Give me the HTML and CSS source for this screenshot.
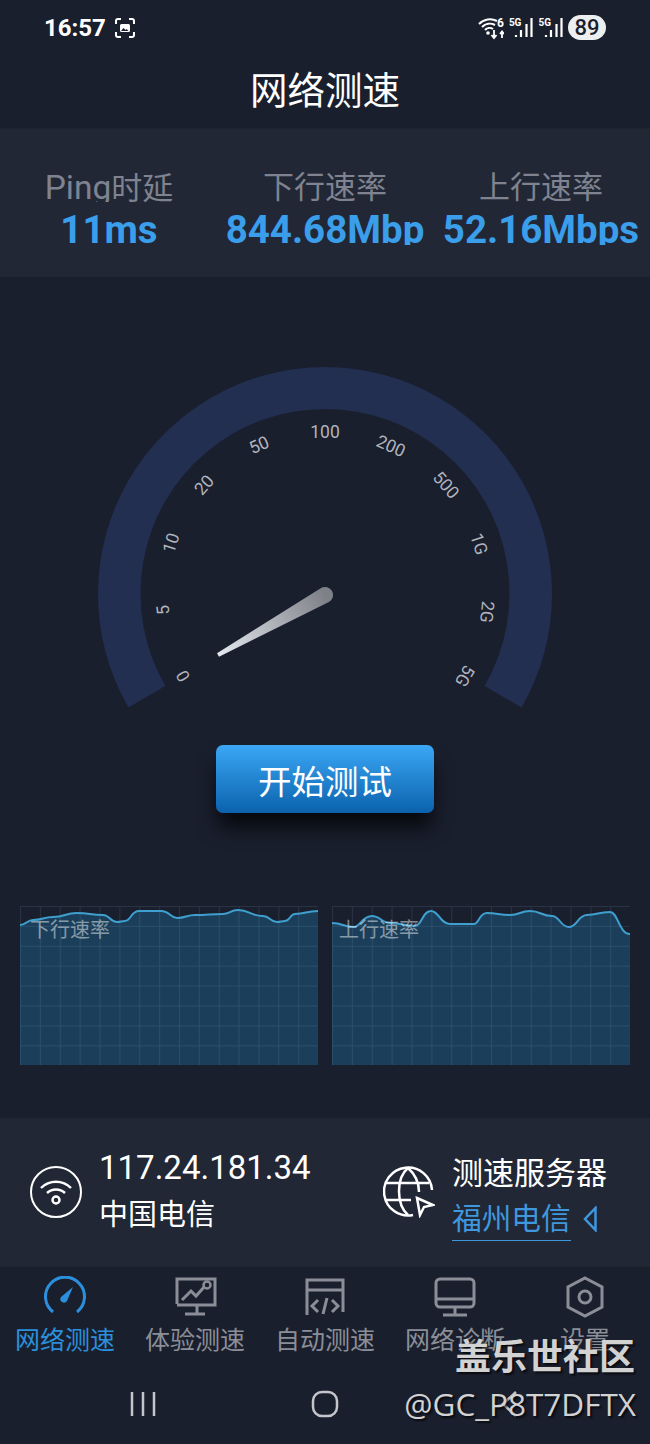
FILE: index.html
```html
<!DOCTYPE html>
<html lang="zh-CN">
<head>
  <meta charset="UTF-8">
  <title>网络测速</title>
  <link rel="stylesheet" href="styles.css">
</head>
<body>
  <div class="status">
    <div class="status-left">
      <span class="clock">16:57</span>
      <svg class="shot" width="22" height="22" viewBox="0 0 22 22">
        <path d="M2 7V4a2 2 0 0 1 2-2h3M15 2h3a2 2 0 0 1 2 2v3M20 15v3a2 2 0 0 1-2 2h-3M7 20H4a2 2 0 0 1-2-2v-3" fill="none" stroke="#fff" stroke-width="2"/>
        <rect x="6" y="7" width="10" height="8" rx="1.5" fill="#fff"/>
        <path d="M7 14l2.500-3 2 2 1-1 2 2z" fill="#1a1f2e"/>
      </svg>
    </div>
    <div class="status-right">
      <svg width="26" height="28" viewBox="0 0 26 28">
        <path d="M1 10a15 15 0 0 1 18-3M4 13a11 11 0 0 1 13-2M7 16a6 6 0 0 1 8-1" fill="none" stroke="#fff" stroke-width="2"/>
        <circle cx="10" cy="19" r="1.800" fill="#fff"/>
        <path d="M16 16v8M13.500 21l2.500 3 2.500-3M24 24v-6M22 20l2-2.500 2 2.500" fill="none" stroke="#fff" stroke-width="1.800"/>
        <text class="wifi-six" x="19" y="13">6</text>
      </svg>
      <div class="signal">
        <span class="five-g">5G</span>
        <svg width="20" height="22" viewBox="0 0 20 22">
          <path d="M3 18v2M8 13v7M13.500 7v13M18.500 1v19" stroke="#fff" stroke-width="2.200"/>
        </svg>
      </div>
      <div class="signal">
        <span class="five-g">5G</span>
        <svg width="20" height="22" viewBox="0 0 20 22">
          <path d="M3 18v2M8 13v7M13.500 7v13M18.500 1v19" stroke="#fff" stroke-width="2.200"/>
        </svg>
      </div>
      <span class="battery">89</span>
    </div>
  </div>

  <h1 class="title">网络测速</h1>

  <div class="stats">
    <div class="stat">
      <div class="stat-label"><span class="latin">Ping</span>时延</div>
      <div class="stat-value">11ms</div>
    </div>
    <div class="stat">
      <div class="stat-label">下行速率</div>
      <div class="stat-value">844.68Mbp</div>
    </div>
    <div class="stat">
      <div class="stat-label">上行速率</div>
      <div class="stat-value">52.16Mbps</div>
    </div>
  </div>

  <svg class="gauge" width="650" height="450" viewBox="0 277 650 450">
    <defs>
      <linearGradient id="needleFill" gradientUnits="userSpaceOnUse" x1="218" y1="655" x2="325" y2="595">
        <stop offset="0" stop-color="#e4e8ef"/>
        <stop offset="1" stop-color="#7e8187"/>
      </linearGradient>
    </defs>
    <path d="M128.400 707.500A227 227 0 1 1 521.600 707.500L484.600 686A184.500 184.500 0 1 0 165.400 686Z" fill="#222f50"/>
    <g class="gauge-nums">
      <text transform="translate(183 676) rotate(-120)">0</text>
      <text transform="translate(163 610) rotate(-96)">5</text>
      <text transform="translate(171 543) rotate(-72)">10</text>
      <text transform="translate(204 485) rotate(-48)">20</text>
      <text transform="translate(259 445) rotate(-24)">50</text>
      <text transform="translate(325 432)">100</text>
      <text transform="translate(391 446) rotate(24)">200</text>
      <text transform="translate(446 485) rotate(48)">500</text>
      <text transform="translate(479 544) rotate(72)">1G</text>
      <text transform="translate(487 612) rotate(96)">2G</text>
      <text transform="translate(465 676) rotate(120)">5G</text>
    </g>
    <path d="M219 656.700L217 653.300L321.100 588A8 8 0 0 1 328.900 602Z" fill="url(#needleFill)"/>
  </svg>

  <button class="start">开始测试</button>

  <div class="charts">
    <svg class="chart" width="298" height="159" viewBox="0 0 298 159">
      <defs>
        <pattern id="grid" width="19.870" height="19.900" patternUnits="userSpaceOnUse">
          <path d="M0.500 0V19.900M0 0.500H19.870" fill="none" stroke="#8fbcd6" stroke-opacity="0.13"/>
        </pattern>
      </defs>
      <path class="area" d="M0 19C6 19 7 14 13 14C23 14 23 11 33 11C45 11 45 7 57 7C70 7 70 9 83 9C90 9 90 16 97 16C101 16 101 15 105 15C111 15 111 5 119 5H141C150 5 150 12 157 12C166 12 166 9 175 9C189 9 189 8 203 8C210 8 210 4 218 4C230 4 230 10 243 10C250 10 250 16 257 16C261 16 261 15 265 15C270 15 270 8 275 8C286 8 286 5 298 5V159H0Z"/>
      <rect class="grid" width="298" height="159"/>
      <path class="line" d="M0 19C6 19 7 14 13 14C23 14 23 11 33 11C45 11 45 7 57 7C70 7 70 9 83 9C90 9 90 16 97 16C101 16 101 15 105 15C111 15 111 5 119 5H141C150 5 150 12 157 12C166 12 166 9 175 9C189 9 189 8 203 8C210 8 210 4 218 4C230 4 230 10 243 10C250 10 250 16 257 16C261 16 261 15 265 15C270 15 270 8 275 8C286 8 286 5 298 5"/>
      <text class="chart-label" x="10" y="31">下行速率</text>
    </svg>
    <svg class="chart" width="298" height="159" viewBox="0 0 298 159">
      <path class="area" d="M0 17C11 17 11 21 22 21C28 21 30 10 40 10C48 10 50 17 58 17C71 17 71 20 83 20C90 20 90 5 99 5C107 5 108 18 118 18H142C147 18 147 7 155 7C166 7 166 9 178 9C188 9 188 5 198 5C209 5 209 10 220 10C228 10 228 21 237 21C245 21 246 9 255 9C266 9 266 6 278 6C286 6 287 28 298 28V159H0Z"/>
      <rect class="grid" width="298" height="159"/>
      <path class="line" d="M0 17C11 17 11 21 22 21C28 21 30 10 40 10C48 10 50 17 58 17C71 17 71 20 83 20C90 20 90 5 99 5C107 5 108 18 118 18H142C147 18 147 7 155 7C166 7 166 9 178 9C188 9 188 5 198 5C209 5 209 10 220 10C228 10 228 21 237 21C245 21 246 9 255 9C266 9 266 6 278 6C286 6 287 28 298 28"/>
      <text class="chart-label" x="7" y="31">上行速率</text>
    </svg>
  </div>

  <div class="info">
    <div class="info-block">
      <svg width="52" height="52" viewBox="0 0 52 52">
        <circle cx="26" cy="26" r="25" fill="none" stroke="#fff" stroke-width="2"/>
        <path d="M11 22a21 21 0 0 1 30 0M17 27a13 13 0 0 1 18 0" fill="none" stroke="#fff" stroke-width="2.500"/>
        <circle cx="26" cy="34" r="3.500" fill="none" stroke="#fff" stroke-width="2.500"/>
      </svg>
      <div class="info-text">
        <div class="ip">117.24.181.34</div>
        <div class="isp">中国电信</div>
      </div>
    </div>
    <div class="info-block">
      <svg width="52" height="52" viewBox="0 0 52 52">
        <path d="M30 49A24 24 0 1 1 49 24" fill="none" stroke="#fff" stroke-width="2.500"/>
        <path d="M25 2C13 12 13 38 25 49M25 2C33 9 36 17 36 26M3 17H46M3 34H28" fill="none" stroke="#fff" stroke-width="2.500"/>
        <path d="M34 32L50 39L41 41L37 49Z" fill="#222735" stroke="#fff" stroke-width="2.500"/>
      </svg>
      <div class="info-text">
        <div class="server-title">测速服务器</div>
        <div class="server-row">
          <span class="server-name">福州电信</span>
          <svg width="14" height="26" viewBox="0 0 14 26">
            <path d="M12.500 2V24L2 13Z" fill="none" stroke="#3f97dd" stroke-width="2.500"/>
          </svg>
        </div>
      </div>
    </div>
  </div>

  <div class="tabs">
    <div class="tab active">
      <svg width="44" height="42" viewBox="0 0 44 42">
        <path d="M10 36A19.500 19.500 0 1 1 34 36" fill="none" stroke="#2b8fdc" stroke-width="3"/>
        <path d="M30 11L24 25A3.500 3.500 0 0 1 18 21Z" fill="#2b8fdc"/>
      </svg>
      <span>网络测速</span>
    </div>
    <div class="tab">
      <svg width="44" height="42" viewBox="0 0 44 42">
        <path d="M4 28V3H42V29H4M24 29V37M12 38H32" fill="none" stroke="#8b8e97" stroke-width="3"/>
        <path d="M9 24L18 15L23 20L32 10" fill="none" stroke="#8b8e97" stroke-width="3"/>
        <circle cx="34" cy="9" r="3.500" fill="#1a1f2e" stroke="#8b8e97" stroke-width="2.500"/>
      </svg>
      <span>体验测速</span>
    </div>
    <div class="tab">
      <svg width="44" height="42" viewBox="0 0 44 42">
        <path d="M4 39V4H40V36M4 14H40" fill="none" stroke="#8b8e97" stroke-width="3"/>
        <path d="M15 24L9 30L15 36M29 24L35 30L29 36M24 22L20 38" fill="none" stroke="#8b8e97" stroke-width="3"/>
      </svg>
      <span>自动测速</span>
    </div>
    <div class="tab">
      <svg width="44" height="42" viewBox="0 0 44 42">
        <rect x="3" y="3" width="38" height="28" rx="4" fill="none" stroke="#8b8e97" stroke-width="3"/>
        <path d="M3 23H41M22 31V38M10 39H34" fill="none" stroke="#8b8e97" stroke-width="3"/>
      </svg>
      <span>网络诊断</span>
    </div>
    <div class="tab">
      <svg width="44" height="42" viewBox="0 0 44 42">
        <path d="M22 2L39 11V31L22 40L5 31V11Z" fill="none" stroke="#8b8e97" stroke-width="3"/>
        <circle cx="22" cy="21" r="6" fill="none" stroke="#8b8e97" stroke-width="3"/>
      </svg>
      <span>设置</span>
    </div>
  </div>

  <div class="navbar">
    <svg width="28" height="28" viewBox="0 0 28 28">
      <path d="M3 2V26M14 2V26M25 2V26" stroke="#c4c6cb" stroke-width="2.500"/>
    </svg>
    <svg width="28" height="28" viewBox="0 0 28 28">
      <rect x="2" y="2" width="24" height="24" rx="9" fill="none" stroke="#c4c6cb" stroke-width="2.500"/>
    </svg>
    <svg width="28" height="28" viewBox="0 0 28 28">
      <path d="M23 2L10 14L23 26" fill="none" stroke="#c4c6cb" stroke-width="2.500"/>
    </svg>
  </div>

  <div class="mark">
    <div class="mark-name">盖乐世社区</div>
    <div class="mark-user">@GC_P8T7DFTX</div>
  </div>
</body>
</html>
```

FILE: styles.css
```css
* { box-sizing: border-box; }
html, body { margin: 0; padding: 0; }
body {
  position: relative;
  width: 650px;
  height: 1444px;
  overflow: hidden;
  background: #1a1f2e;
  color: #fff;
  font-family: Roboto, "Noto Sans CJK SC", sans-serif;
}

.status { height: 55px; padding: 0 44px; display: flex; justify-content: space-between; align-items: center; }
.status-left { display: flex; align-items: center; gap: 8px; }
.clock { font-size: 24px; font-weight: 700; }
.status-right { display: flex; align-items: center; gap: 5px; }
.wifi-six { font-size: 12px; font-weight: 700; fill: #fff; }
.signal { display: flex; align-items: flex-end; }
.five-g { font-size: 10px; font-weight: 700; margin-right: -8px; align-self: flex-start; line-height: 12px; }
.battery { width: 38px; height: 25px; border-radius: 13px; background: #eceef0; color: #1a1f2e; font-size: 22px; font-weight: 500; line-height: 25px; text-align: center; }

.title { margin: 0; height: 73px; font-size: 37.500px; font-weight: 400; line-height: 72px; text-align: center; }

.stats { height: 149px; background: #222735; border-top: 1px solid #1f2431; display: grid; grid-template-columns: repeat(3, 1fr); padding: 38px 1px 0; }
.stat { text-align: center; }
.stat-label { height: 35px; overflow: hidden; font-size: 31px; line-height: 41px; color: #7f8390; }
.latin { font-size: 33.500px; }
.stat-value { height: 43px; overflow: hidden; font-size: 38.500px; font-weight: 700; line-height: 56px; color: #3b9eea; white-space: nowrap; }

.gauge { display: block; }
.gauge-nums text { font-size: 17.500px; fill: #b0b4bc; text-anchor: middle; dominant-baseline: central; }

.start {
  display: block;
  width: 218px;
  height: 68px;
  margin: 18px auto 0;
  border: 0;
  border-radius: 7px;
  background: linear-gradient(#3ba7f5, #0b62ad);
  box-shadow: 0 16px 20px -2px rgba(0, 0, 0, 0.75);
  color: #fff;
  font-family: inherit;
  font-size: 33.500px;
  line-height: 76px;
  padding: 0;
}

.charts { margin-top: 93px; padding: 0 20px; display: flex; justify-content: space-between; }
.chart { display: block; }
.area { fill: #1b3f5a; }
.grid { fill: url(#grid); }
.line { fill: none; stroke: #3f9fcf; stroke-width: 2; }
.chart-label { font-size: 20px; fill: #fff; fill-opacity: 0.48; }

.info { margin-top: 53px; height: 148px; background: #222735; display: grid; grid-template-columns: 383px 1fr; align-items: center; padding-left: 30px; }
.info-block { display: flex; align-items: center; gap: 17px; }
.info-block + .info-block { margin-left: -30px; }
.ip { font-size: 33px; line-height: 46px; }
.isp { font-size: 29px; line-height: 47px; padding-top: 1px; }
.server-title { font-size: 31px; line-height: 46px; padding-top: 7px; }
.server-row { display: flex; align-items: center; gap: 12px; }
.server-name { font-size: 29.700px; line-height: 43px; color: #3f97dd; border-bottom: 1.500px solid #3f97dd; }

.tabs { height: 104px; padding-top: 9px; display: grid; grid-template-columns: repeat(5, 130px); border-top: 1px solid #1f2431; }
.tab { display: flex; flex-direction: column; align-items: center; color: #8b8e97; font-size: 25px; line-height: 34px; gap: 6px; }
.tab.active { color: #2b8fdc; }

.navbar { height: 74px; padding: 20px 0 0; display: grid; grid-template-columns: repeat(3, 182px); justify-content: center; justify-items: center; align-items: start; }

/* watermark lies over the tabs and the nav bar */
.mark { position: absolute; right: 14px; top: 1336px; text-align: right; color: #d2d2d2; text-shadow: 2px 2px 2px rgba(0, 0, 0, 0.7); }
.mark-name { font-size: 36px; line-height: 44px; font-weight: 700; margin-right: 1px; }
.mark-user { margin-top: 2px; font-size: 31.500px; line-height: 44px; font-family: "Open Sans", sans-serif; }
```
